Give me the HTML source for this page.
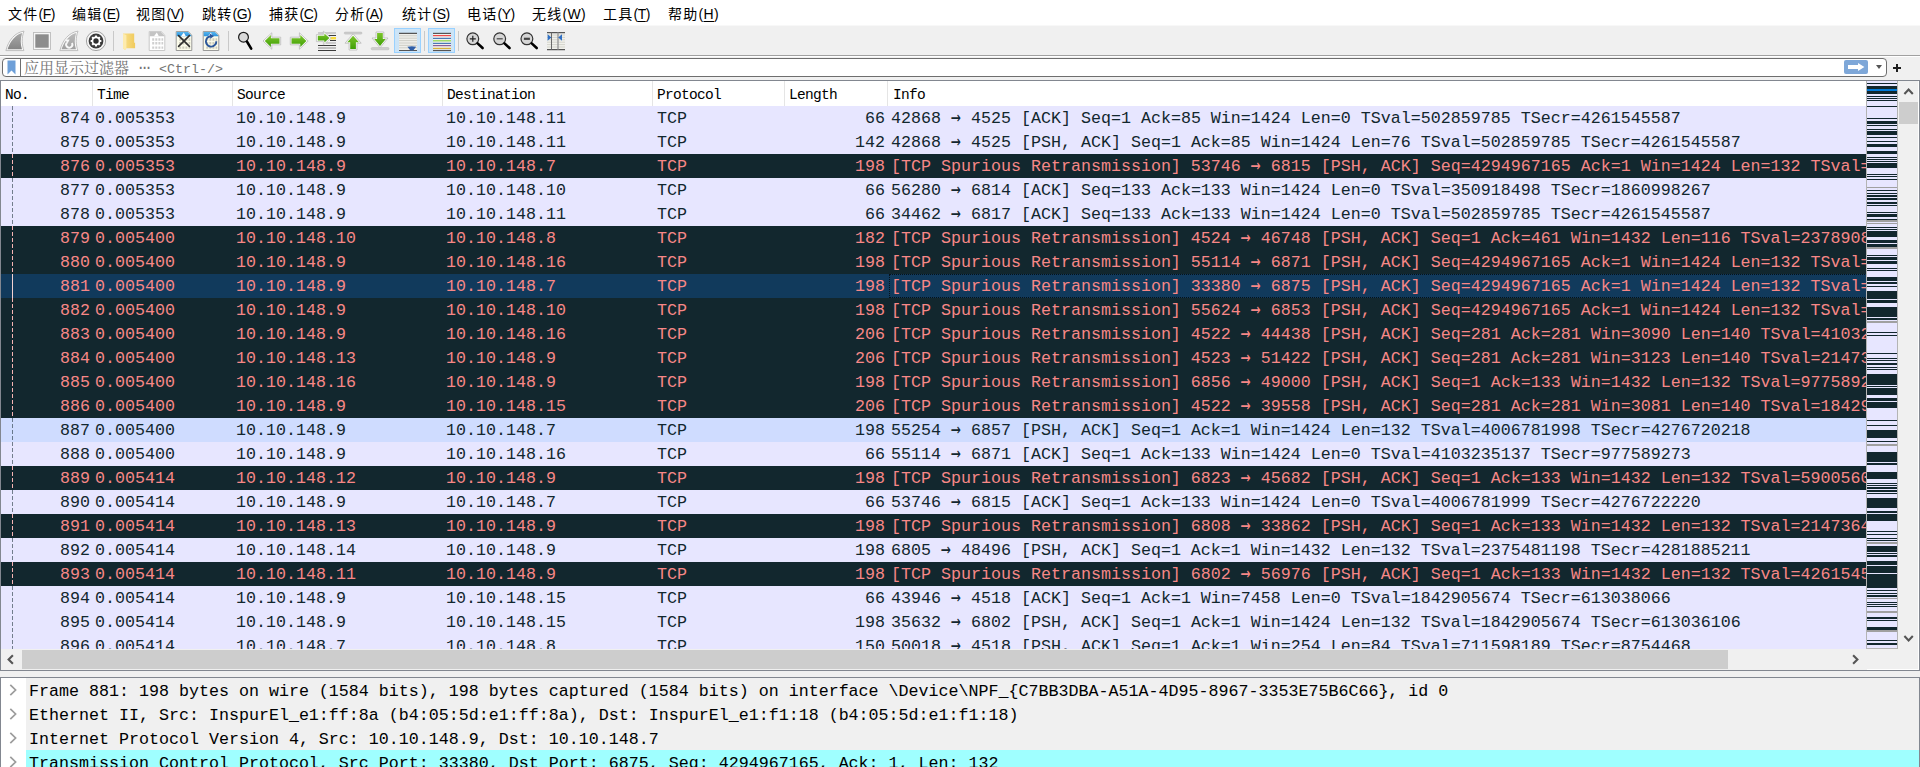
<!DOCTYPE html>
<html lang="zh-CN">
<head>
<meta charset="utf-8">
<title>Wireshark</title>
<style>
html,body{margin:0;padding:0;}
body{width:1920px;height:767px;overflow:hidden;background:#f0f0f0;position:relative;font-family:"Liberation Sans","Noto Sans CJK SC",sans-serif;}
.abs{position:absolute;}
#menubar{position:absolute;left:0;top:0;width:1920px;height:25px;background:#fff;border-bottom:1px solid #f8f8f8;}
#menubar span{position:absolute;top:4px;font-size:14px;line-height:20px;color:#000;white-space:nowrap;letter-spacing:-0.45px;}
#menubar b{font-weight:normal;letter-spacing:1.2px;}
#menubar u{text-decoration:underline;text-underline-offset:2px;}
#toolbar{position:absolute;left:0;top:26px;width:1920px;height:29px;background:#f0f0f0;}
#tbline{position:absolute;left:0;top:55px;width:1920px;height:1px;background:#a0a0a0;}
#tbline2{position:absolute;left:0;top:56px;width:1920px;height:1px;background:#fff;}
#filter{position:absolute;left:2px;top:58px;width:1883px;height:17px;border:1px solid #6e6e6e;border-radius:4px;background:#fff;}
#filter .bm{position:absolute;left:4px;top:1px;width:9px;height:15px;}
#filter .sep{position:absolute;left:17px;top:0;width:1px;height:17px;background:#6e6e6e;}
#filter .ph{position:absolute;left:21px;top:1px;word-spacing:-0.5px;font:13.33px/20px "Liberation Mono","Noto Serif CJK SC",monospace;color:#747474;white-space:pre;}
#filter .ph b{font-weight:normal;font-size:15px;}
#filter .ph em{font-style:normal;font-size:15px;position:relative;top:-5px;transform:scale(1.3);display:inline-block;width:15px;text-align:center;}
#filter .apply{position:absolute;left:1841px;top:1px;width:24px;height:14px;border-radius:2px;background:#7ea7d8;}
#filter .dd{position:absolute;left:1872.5px;top:6px;width:0;height:0;border-left:3.5px solid transparent;border-right:3.5px solid transparent;border-top:4px solid #555;}
#plus{position:absolute;left:1893px;top:64px;width:8px;height:8px;}
#plus:before{content:"";position:absolute;left:0;top:3px;width:8px;height:2px;background:#1e1e1e;}
#plus:after{content:"";position:absolute;left:3px;top:0;width:2px;height:8px;background:#1e1e1e;}
#list{position:absolute;left:0;top:80px;width:1920px;height:591px;background:#f0f0f0;}
#list .bt{position:absolute;left:0;top:0;width:1920px;height:1px;background:#828790;}
#list .bl{position:absolute;left:0;top:0;width:1px;height:591px;background:#828790;}
#list .bb{position:absolute;left:0;top:590px;width:1920px;height:1px;background:#828790;}
#list .br{position:absolute;left:1918px;top:1px;width:1px;height:589px;background:#fff;border-right:1px solid #828790;}
#hdr{position:absolute;left:1px;top:1px;width:1865px;height:25px;background:#fff;}
#hdr span{position:absolute;top:2px;font:14.5px/24px "Liberation Mono",monospace;letter-spacing:-0.7px;color:#000;white-space:pre;}
#hdr i{position:absolute;top:0;width:1px;height:25px;background:#e5e5e5;}
#rows{position:absolute;left:1px;top:26px;width:1865px;height:543px;overflow:hidden;background:#e7e6ff;}
.r{position:absolute;left:0;width:1865px;height:24px;font:16.67px/24px "Liberation Mono",monospace;white-space:pre;overflow:hidden;}
.r .c{position:absolute;top:1px;height:24px;}
.r.n{background:#e7e6ff;color:#12272e;}
.r.b{background:#12272e;color:#f78787;}
.r.s{background:#113a5c;color:#f78787;}
.r.h{background:#cfdcff;color:#12272e;}
.r .ln{position:absolute;left:11px;top:0;width:1px;height:24px;background:repeating-linear-gradient(to bottom,currentColor 0,currentColor 4px,transparent 4px,transparent 6px);opacity:.55}
.r.b .ln{color:#f6b4b4;opacity:1}
.r.s .ln{background:#f3d2d2;opacity:1}
.r .fr{position:absolute;left:888px;top:0;width:990px;height:22px;border:1px dotted #06121a;}
.in b{font-weight:normal;font-family:"DejaVu Sans Mono","Liberation Mono",monospace;font-size:16.6px;display:inline-block;width:10px;position:relative;top:0px;line-height:1;transform:scale(1,1.3);}
.no{left:0;width:89px;text-align:right;}
.tm{left:94px;}
.sr{left:235px;}
.ds{left:445px;}
.pr{left:656px;}
.le{left:786px;width:98px;text-align:right;}
.in{left:890px;}
.vs{position:absolute;left:1898px;top:1px;width:20px;height:568px;background:#f0f0f0;}
.hs{position:absolute;left:1px;top:569px;width:1866px;height:21px;background:#f0f0f0;}
#details{position:absolute;left:0;top:677px;width:1920px;height:90px;background:#fff;border-top:1px solid #828790;border-left:1px solid #828790;border-right:1px solid #828790;box-sizing:border-box;}
#details .bg{position:absolute;left:25px;top:0;width:1893px;height:90px;background:#f0f0f0;}
.d{position:absolute;left:0;width:1917px;height:24px;font:16.67px/24px "Liberation Mono",monospace;color:#000;white-space:pre;}
.d span{position:absolute;left:28px;top:2px;}
.d svg{position:absolute;left:8px;top:6px;}
.d.sel{background:transparent}
</style>
</head>
<body>
<div id="menubar">
<span style="left:8px"><b>文件</b>(<u>F</u>)</span>
<span style="left:72px"><b>编辑</b>(<u>E</u>)</span>
<span style="left:136px"><b>视图</b>(<u>V</u>)</span>
<span style="left:202px"><b>跳转</b>(<u>G</u>)</span>
<span style="left:269px"><b>捕获</b>(<u>C</u>)</span>
<span style="left:335px"><b>分析</b>(<u>A</u>)</span>
<span style="left:402px"><b>统计</b>(<u>S</u>)</span>
<span style="left:467px"><b>电话</b>(<u>Y</u>)</span>
<span style="left:532px;letter-spacing:0.4px"><b>无线</b>(<u>W</u>)</span>
<span style="left:603px"><b>工具</b>(<u>T</u>)</span>
<span style="left:668px;letter-spacing:0.4px"><b>帮助</b>(<u>H</u>)</span>
</div>
<div id="toolbar"><svg width="600" height="29" viewBox="0 26 600 29" style="position:absolute;left:0;top:0">
<defs>
<linearGradient id="gg" x1="0" y1="0" x2="0" y2="1"><stop offset="0" stop-color="#7cc52b"/><stop offset="1" stop-color="#3f9e06"/></linearGradient>
<linearGradient id="gf" x1="0" y1="0" x2="1" y2="0"><stop offset="0" stop-color="#f9e08c"/><stop offset="1" stop-color="#f0ca5c"/></linearGradient>
<linearGradient id="gfin" x1="0" y1="0" x2="0" y2="1"><stop offset="0" stop-color="#a9a9a9"/><stop offset="1" stop-color="#858585"/></linearGradient>
<linearGradient id="gfin2" x1="0" y1="0" x2="0" y2="1"><stop offset="0" stop-color="#bdbdbd"/><stop offset="1" stop-color="#a0a0a0"/></linearGradient>
<linearGradient id="gb" x1="0" y1="0" x2="0" y2="1"><stop offset="0" stop-color="#55b5ee"/><stop offset="1" stop-color="#2f93dc"/></linearGradient>
</defs>
<!-- separators -->
<g stroke="#c9c9c9" stroke-width="1"><path d="M113.5 31v20M228.5 31v20M424.5 31v20M458.5 31v20"/></g>
<!-- shark fin start (disabled) -->
<g id="fin1">
<path d="M24 31.1C15 32.5 8.5 40 5.9 50.6H23.9C22 45 21.3 38 24 31.1Z" fill="#fafafa" stroke="#b9b9b9" stroke-width="0.9"/>
<path d="M22.2 32.9C15.6 34.6 10.2 41 7.5 49.3H22C20.4 44.5 20.2 38.5 22.2 32.9Z" fill="url(#gfin)"/>
</g>
<!-- stop -->
<rect x="33.5" y="32.5" width="17" height="17" fill="#f6f6f6" stroke="#bcbcbc" stroke-width="0.9"/>
<rect x="35.3" y="34.3" width="13.4" height="13.4" fill="#8c8c8c"/>
<!-- restart fin -->
<g transform="translate(54,0)">
<path d="M24 31.1C15 32.5 8.5 40 5.9 50.6H23.9C22 45 21.3 38 24 31.1Z" fill="#fafafa" stroke="#b9b9b9" stroke-width="0.9"/>
<path d="M22.2 32.9C15.6 34.6 10.2 41 7.5 49.3H22C20.4 44.5 20.2 38.5 22.2 32.9Z" fill="url(#gfin2)"/>
<path d="M12.9 42.6A3.1 3.1 0 1 0 17.9 43" fill="none" stroke="#f8f8f8" stroke-width="1.9"/>
<path d="M11.2 39.4l4.4 0.2-2 4z" fill="#f8f8f8"/>
</g>
<!-- gear / options -->
<circle cx="96" cy="41" r="9.6" fill="#f6f6f6" stroke="#9a9a9a" stroke-width="0.9"/>
<circle cx="96" cy="41" r="7.4" fill="#3b3b3b"/>
<g fill="#fff"><circle cx="96" cy="41" r="4.4"/>
<g id="teeth"><rect x="94.9" y="35.6" width="2.2" height="10.8" rx="0.5"/><rect x="94.9" y="35.6" width="2.2" height="10.8" rx="0.5" transform="rotate(45 96 41)"/><rect x="94.9" y="35.6" width="2.2" height="10.8" rx="0.5" transform="rotate(90 96 41)"/><rect x="94.9" y="35.6" width="2.2" height="10.8" rx="0.5" transform="rotate(135 96 41)"/></g></g>
<circle cx="96" cy="41" r="2.7" fill="#2e2e2e"/>
<!-- folder -->
<path d="M123 33.6h11.2v9.2h0.9v5.4H125.6l-0.3 1.8-2.3-1.6z" fill="url(#gf)"/>
<path d="M123 33.6l3.4 1.6v13l-1.1 1.8-2.3-1.6z" fill="#fdebae"/>
<!-- save (disabled) -->
<g>
<path d="M149.2 31.6h12l3.6 3.6v15.3h-15.6z" fill="#fff" stroke="#c3c3c3" stroke-width="0.9"/>
<path d="M149.7 32.1h11.3l3.3 3.3v0.8H149.7z" fill="#c4c4c4"/>
<path d="M154 36.2l2.8-3.6 2 3.6z" fill="#fff"/>
<g stroke="#cfcfcf" stroke-width="2.4"><path d="M152.2 39.5h11M152.2 43.3h11M152.2 47.6h11" stroke-dasharray="2 1.1"/></g>
</g>
<!-- close file -->
<g>
<path d="M176.2 31.6h12l3.6 3.6v15.3h-15.6z" fill="#fbfbea" stroke="#8f8f8f" stroke-width="0.9"/>
<path d="M176.7 32.1h11.3l3.3 3.3v0.8H176.7z" fill="url(#gb)"/>
<path d="M181 36.2l2.8-3.6 2 3.6z" fill="#fff"/>
<g stroke="#cdcdbc" stroke-width="2.4"><path d="M179.2 39.5h11M179.2 43.3h11M179.2 47.6h11" stroke-dasharray="2 1.1"/></g>
<path d="M178.6 35.6l10.8 10.8M189.4 35.6l-10.8 10.8" stroke="#2e2e2e" stroke-width="1.6" stroke-linecap="round"/>
</g>
<!-- reload file -->
<g>
<path d="M203.2 31.6h12l3.6 3.6v15.3h-15.6z" fill="#fbfbea" stroke="#8f8f8f" stroke-width="0.9"/>
<path d="M203.7 32.1h11.3l3.3 3.3v0.8H203.7z" fill="url(#gb)"/>
<path d="M208 36.2l2.8-3.6 2 3.6z" fill="#fff"/>
<g stroke="#cdcdbc" stroke-width="2.4"><path d="M206.2 39.5h11M206.2 43.3h11M206.2 47.6h11" stroke-dasharray="2 1.1"/></g>
<path d="M210.8 36.2A5.2 5.2 0 1 0 216.3 41.2" fill="none" stroke="#2b579a" stroke-width="1.9"/>
<path d="M209.6 33.6l4.4 2.4-3.6 2.8z" fill="#2b579a"/>
</g>
<!-- find -->
<circle cx="243.5" cy="37.2" r="4.9" fill="#d9d9d9" stroke="#1b1b1b" stroke-width="1.2"/>
<path d="M247 41.6l4.2 7" stroke="#000" stroke-width="2.6" stroke-linecap="round"/>
<!-- back arrow -->
<path d="M263 41L271.8 32.8V37.2H280.7V44.8H271.8V49.2Z" fill="#fbfbfb" stroke="#b9b9b9" stroke-width="0.8" stroke-linejoin="round"/>
<path d="M264.8 41L270.9 35V38.3H279.5V43.8H270.9V47Z" fill="url(#gg)"/>
<!-- forward arrow -->
<path d="M308.2 41L299.4 32.8V37.2H290.3V44.8H299.4V49.2Z" fill="#fbfbfb" stroke="#b9b9b9" stroke-width="0.8" stroke-linejoin="round"/>
<path d="M306.4 41L300.3 35V38.3H291.5V43.8H300.3V47Z" fill="url(#gg)"/>
<!-- goto packet -->
<g>
<g stroke-width="1"><path d="M318 33h18" stroke="#a9a9a9"/><path d="M328 35.5h8" stroke="#3c3c3c"/><path d="M330 40.5h6" stroke="#3c3c3c"/><path d="M326 43h10" stroke="#a9a9a9"/><path d="M318 45.5h18" stroke="#3c3c3c"/><path d="M318 48h18" stroke="#a9a9a9" stroke-width="1.4"/><path d="M318 50.5h18" stroke="#3c3c3c"/></g>
<rect x="330" y="37" width="6" height="2.4" fill="#f7dc3c"/>
<path d="M331.2 38L323.4 31.2V34.6H316.4V41.6H323.4V44.8Z" fill="#fbfbfb" stroke="#b9b9b9" stroke-width="0.7" stroke-linejoin="round"/><path d="M329.4 38L324.4 33.6V35.8H317.8V40.4H324.4V42.6Z" fill="url(#gg)"/>
</g>
<!-- first packet -->
<rect x="344.2" y="32.1" width="17.8" height="2" rx="1" fill="#cfcfcf" stroke="#b4b4b4" stroke-width="0.5"/>
<path d="M353.1 33.8L361.2 43.2H357V50H349.1V43.2H345Z" fill="#fbfbfb" stroke="#b9b9b9" stroke-width="0.8" stroke-linejoin="round"/>
<path d="M353.1 35.8L358.9 42.2H355.9V49H350.2V42.2H347.3Z" fill="url(#gg)"/>
<!-- last packet -->
<rect x="371.2" y="47.6" width="17.8" height="2.2" rx="1" fill="#cfcfcf" stroke="#b4b4b4" stroke-width="0.5"/>
<path d="M380 47.8L388 38H383.8V32H376V38H372Z" fill="#fbfbfb" stroke="#b9b9b9" stroke-width="0.8" stroke-linejoin="round"/>
<path d="M380 46L385.8 39H382.8V33H377.1V39H374.2Z" fill="url(#gg)"/>
<!-- autoscroll (checked) -->
<rect x="394.5" y="28.5" width="26" height="24" fill="#cce4f7" stroke="#99d1ff"/>
<rect x="399" y="33" width="18" height="18" fill="#efefeb"/>
<g stroke="#cfcfc8" stroke-width="1"><path d="M399 35.8h18M399 38.2h18M399 40.6h18M399 43h18M399 45.4h18M399 47.8h18"/></g>
<path d="M399 33.4h18M399 50.5h18" stroke="#555" stroke-width="1.1"/>
<path d="M407.4 46.8q4.4-1.2 8.8 0l-3 3.6h-2.8z" fill="#2f5fa8"/>
<!-- colorize (checked) -->
<rect x="428.5" y="28.5" width="26" height="24" fill="#cce4f7" stroke="#99d1ff"/>
<rect x="433" y="33" width="18" height="18" fill="#efefef"/>
<g stroke-width="1.2"><path d="M433 33.4h18" stroke="#555"/><path d="M433 35.6h18" stroke="#ef4a4a"/><path d="M433 38.4h18" stroke="#4a78b5"/><path d="M433 40.8h18" stroke="#8ed84a"/><path d="M433 43.4h18" stroke="#4a78b5"/><path d="M433 45.6h18" stroke="#8b5f97"/><path d="M433 48.4h18" stroke="#d9b13b"/><path d="M433 50.5h18" stroke="#555"/></g>
<!-- zoom in -->
<g id="zin"><circle cx="472.8" cy="38.8" r="5.9" fill="#d6d6d6" stroke="#333" stroke-width="1.2"/><path d="M477.6 43.4l5 4.6" stroke="#000" stroke-width="2.6" stroke-linecap="round"/></g>
<path d="M469.8 38.8h6M472.8 35.8v6" stroke="#222" stroke-width="1.2"/>
<!-- zoom out -->
<circle cx="499.7" cy="38.8" r="5.9" fill="#d6d6d6" stroke="#333" stroke-width="1.2"/><path d="M504.5 43.4l5 4.6" stroke="#000" stroke-width="2.6" stroke-linecap="round"/>
<path d="M496.7 38.8h6" stroke="#444" stroke-width="1.2"/>
<!-- zoom reset -->
<circle cx="526.9" cy="38.8" r="5.9" fill="#d6d6d6" stroke="#333" stroke-width="1.2"/><path d="M531.7 43.4l5 4.6" stroke="#000" stroke-width="2.6" stroke-linecap="round"/>
<path d="M523.9 38.8h6" stroke="#444" stroke-width="2.2"/>
<!-- resize columns -->
<rect x="547" y="32.5" width="18" height="17" fill="#f1f1ec"/>
<g stroke="#d0d0c8" stroke-width="0.9"><path d="M547 35h18M547 37.4h18M547 39.8h18M547 42.2h18M547 44.6h18M547 47h18"/></g>
<path d="M547 32.6h18M547 49.6h18" stroke="#555" stroke-width="1.2"/>
<path d="M551.5 32.5v17" stroke="#6a6a6a" stroke-width="1"/><path d="M558 32.5v17" stroke="#9a9a9a" stroke-width="1.4"/>
<path d="M547.6 34.3l3.8 3.2-3.8 3.2z" fill="#2f6fc4"/><path d="M562 34.3l-3.8 3.2 3.8 3.2z" fill="#2f6fc4"/>
</svg>
</div>
<div id="tbline"></div><div id="tbline2"></div>
<div id="filter"><svg class="bm" viewBox="0 0 9 15"><path d="M0.5 0.5h8v14l-4-4-4 4z" fill="#6d9fd8"/></svg><i class="sep"></i><span class="ph"><b>应用显示过滤器</b> <em>…</em> &lt;Ctrl-/&gt;</span><i class="apply"><svg width="24" height="14" viewBox="0 0 24 14" style="position:absolute;left:0;top:0"><path d="M4 5h10V3l6.4 4-6.4 4V9H4z" fill="#fff"/></svg></i><i class="dd"></i></div>
<div id="plus"></div>
<div id="list">
<div id="hdr">
<span style="left:4px">No.</span><i style="left:91px"></i>
<span style="left:96px">Time</span><i style="left:231px"></i>
<span style="left:236px">Source</span><i style="left:441px"></i>
<span style="left:446px">Destination</span><i style="left:651px"></i>
<span style="left:656px">Protocol</span><i style="left:783px"></i>
<span style="left:788px">Length</span><i style="left:886px"></i>
<span style="left:892px">Info</span>
</div>
<div id="rows">
<div class="r n" style="top:0px"><i class="ln"></i><span class="c no">874</span><span class="c tm">0.005353</span><span class="c sr">10.10.148.9</span><span class="c ds">10.10.148.11</span><span class="c pr">TCP</span><span class="c le">66</span><span class="c in">42868 <b>→</b> 4525 [ACK] Seq=1 Ack=85 Win=1424 Len=0 TSval=502859785 TSecr=4261545587</span></div>
<div class="r n" style="top:24px"><i class="ln"></i><span class="c no">875</span><span class="c tm">0.005353</span><span class="c sr">10.10.148.9</span><span class="c ds">10.10.148.11</span><span class="c pr">TCP</span><span class="c le">142</span><span class="c in">42868 <b>→</b> 4525 [PSH, ACK] Seq=1 Ack=85 Win=1424 Len=76 TSval=502859785 TSecr=4261545587</span></div>
<div class="r b" style="top:48px"><i class="ln"></i><span class="c no">876</span><span class="c tm">0.005353</span><span class="c sr">10.10.148.9</span><span class="c ds">10.10.148.7</span><span class="c pr">TCP</span><span class="c le">198</span><span class="c in">[TCP Spurious Retransmission] 53746 <b>→</b> 6815 [PSH, ACK] Seq=4294967165 Ack=1 Win=1424 Len=132 TSval=4006781998 TSecr=4276720218</span></div>
<div class="r n" style="top:72px"><i class="ln"></i><span class="c no">877</span><span class="c tm">0.005353</span><span class="c sr">10.10.148.9</span><span class="c ds">10.10.148.10</span><span class="c pr">TCP</span><span class="c le">66</span><span class="c in">56280 <b>→</b> 6814 [ACK] Seq=133 Ack=133 Win=1424 Len=0 TSval=350918498 TSecr=1860998267</span></div>
<div class="r n" style="top:96px"><i class="ln"></i><span class="c no">878</span><span class="c tm">0.005353</span><span class="c sr">10.10.148.9</span><span class="c ds">10.10.148.11</span><span class="c pr">TCP</span><span class="c le">66</span><span class="c in">34462 <b>→</b> 6817 [ACK] Seq=133 Ack=133 Win=1424 Len=0 TSval=502859785 TSecr=4261545587</span></div>
<div class="r b" style="top:120px"><i class="ln"></i><span class="c no">879</span><span class="c tm">0.005400</span><span class="c sr">10.10.148.10</span><span class="c ds">10.10.148.8</span><span class="c pr">TCP</span><span class="c le">182</span><span class="c in">[TCP Spurious Retransmission] 4524 <b>→</b> 46748 [PSH, ACK] Seq=1 Ack=461 Win=1432 Len=116 TSval=2378908554 TSecr=711598189</span></div>
<div class="r b" style="top:144px"><i class="ln"></i><span class="c no">880</span><span class="c tm">0.005400</span><span class="c sr">10.10.148.9</span><span class="c ds">10.10.148.16</span><span class="c pr">TCP</span><span class="c le">198</span><span class="c in">[TCP Spurious Retransmission] 55114 <b>→</b> 6871 [PSH, ACK] Seq=4294967165 Ack=1 Win=1424 Len=132 TSval=4103235137 TSecr=977589273</span></div>
<div class="r s" style="top:168px"><i class="ln"></i><i class="fr"></i><span class="c no">881</span><span class="c tm">0.005400</span><span class="c sr">10.10.148.9</span><span class="c ds">10.10.148.7</span><span class="c pr">TCP</span><span class="c le">198</span><span class="c in">[TCP Spurious Retransmission] 33380 <b>→</b> 6875 [PSH, ACK] Seq=4294967165 Ack=1 Win=1424 Len=132 TSval=4006781998 TSecr=4276720218</span></div>
<div class="r b" style="top:192px"><i class="ln"></i><span class="c no">882</span><span class="c tm">0.005400</span><span class="c sr">10.10.148.9</span><span class="c ds">10.10.148.10</span><span class="c pr">TCP</span><span class="c le">198</span><span class="c in">[TCP Spurious Retransmission] 55624 <b>→</b> 6853 [PSH, ACK] Seq=4294967165 Ack=1 Win=1424 Len=132 TSval=350918498 TSecr=1860998267</span></div>
<div class="r b" style="top:216px"><i class="ln"></i><span class="c no">883</span><span class="c tm">0.005400</span><span class="c sr">10.10.148.9</span><span class="c ds">10.10.148.16</span><span class="c pr">TCP</span><span class="c le">206</span><span class="c in">[TCP Spurious Retransmission] 4522 <b>→</b> 44438 [PSH, ACK] Seq=281 Ack=281 Win=3090 Len=140 TSval=4103235137 TSecr=977589273</span></div>
<div class="r b" style="top:240px"><i class="ln"></i><span class="c no">884</span><span class="c tm">0.005400</span><span class="c sr">10.10.148.13</span><span class="c ds">10.10.148.9</span><span class="c pr">TCP</span><span class="c le">206</span><span class="c in">[TCP Spurious Retransmission] 4523 <b>→</b> 51422 [PSH, ACK] Seq=281 Ack=281 Win=3123 Len=140 TSval=2147364518 TSecr=502859785</span></div>
<div class="r b" style="top:264px"><i class="ln"></i><span class="c no">885</span><span class="c tm">0.005400</span><span class="c sr">10.10.148.16</span><span class="c ds">10.10.148.9</span><span class="c pr">TCP</span><span class="c le">198</span><span class="c in">[TCP Spurious Retransmission] 6856 <b>→</b> 49000 [PSH, ACK] Seq=1 Ack=133 Win=1432 Len=132 TSval=977589273 TSecr=4103235137</span></div>
<div class="r b" style="top:288px"><i class="ln"></i><span class="c no">886</span><span class="c tm">0.005400</span><span class="c sr">10.10.148.9</span><span class="c ds">10.10.148.15</span><span class="c pr">TCP</span><span class="c le">206</span><span class="c in">[TCP Spurious Retransmission] 4522 <b>→</b> 39558 [PSH, ACK] Seq=281 Ack=281 Win=3081 Len=140 TSval=1842905674 TSecr=613036106</span></div>
<div class="r h" style="top:312px"><i class="ln"></i><span class="c no">887</span><span class="c tm">0.005400</span><span class="c sr">10.10.148.9</span><span class="c ds">10.10.148.7</span><span class="c pr">TCP</span><span class="c le">198</span><span class="c in">55254 <b>→</b> 6857 [PSH, ACK] Seq=1 Ack=1 Win=1424 Len=132 TSval=4006781998 TSecr=4276720218</span></div>
<div class="r n" style="top:336px"><i class="ln"></i><span class="c no">888</span><span class="c tm">0.005400</span><span class="c sr">10.10.148.9</span><span class="c ds">10.10.148.16</span><span class="c pr">TCP</span><span class="c le">66</span><span class="c in">55114 <b>→</b> 6871 [ACK] Seq=1 Ack=133 Win=1424 Len=0 TSval=4103235137 TSecr=977589273</span></div>
<div class="r b" style="top:360px"><i class="ln"></i><span class="c no">889</span><span class="c tm">0.005414</span><span class="c sr">10.10.148.12</span><span class="c ds">10.10.148.9</span><span class="c pr">TCP</span><span class="c le">198</span><span class="c in">[TCP Spurious Retransmission] 6823 <b>→</b> 45682 [PSH, ACK] Seq=1 Ack=133 Win=1432 Len=132 TSval=590056098 TSecr=502859785</span></div>
<div class="r n" style="top:384px"><i class="ln"></i><span class="c no">890</span><span class="c tm">0.005414</span><span class="c sr">10.10.148.9</span><span class="c ds">10.10.148.7</span><span class="c pr">TCP</span><span class="c le">66</span><span class="c in">53746 <b>→</b> 6815 [ACK] Seq=1 Ack=133 Win=1424 Len=0 TSval=4006781999 TSecr=4276722220</span></div>
<div class="r b" style="top:408px"><i class="ln"></i><span class="c no">891</span><span class="c tm">0.005414</span><span class="c sr">10.10.148.13</span><span class="c ds">10.10.148.9</span><span class="c pr">TCP</span><span class="c le">198</span><span class="c in">[TCP Spurious Retransmission] 6808 <b>→</b> 33862 [PSH, ACK] Seq=1 Ack=133 Win=1432 Len=132 TSval=2147364518 TSecr=502859785</span></div>
<div class="r n" style="top:432px"><i class="ln"></i><span class="c no">892</span><span class="c tm">0.005414</span><span class="c sr">10.10.148.14</span><span class="c ds">10.10.148.9</span><span class="c pr">TCP</span><span class="c le">198</span><span class="c in">6805 <b>→</b> 48496 [PSH, ACK] Seq=1 Ack=1 Win=1432 Len=132 TSval=2375481198 TSecr=4281885211</span></div>
<div class="r b" style="top:456px"><i class="ln"></i><span class="c no">893</span><span class="c tm">0.005414</span><span class="c sr">10.10.148.11</span><span class="c ds">10.10.148.9</span><span class="c pr">TCP</span><span class="c le">198</span><span class="c in">[TCP Spurious Retransmission] 6802 <b>→</b> 56976 [PSH, ACK] Seq=1 Ack=133 Win=1432 Len=132 TSval=4261545587 TSecr=502859785</span></div>
<div class="r n" style="top:480px"><i class="ln"></i><span class="c no">894</span><span class="c tm">0.005414</span><span class="c sr">10.10.148.9</span><span class="c ds">10.10.148.15</span><span class="c pr">TCP</span><span class="c le">66</span><span class="c in">43946 <b>→</b> 4518 [ACK] Seq=1 Ack=1 Win=7458 Len=0 TSval=1842905674 TSecr=613038066</span></div>
<div class="r n" style="top:504px"><i class="ln"></i><span class="c no">895</span><span class="c tm">0.005414</span><span class="c sr">10.10.148.9</span><span class="c ds">10.10.148.15</span><span class="c pr">TCP</span><span class="c le">198</span><span class="c in">35632 <b>→</b> 6802 [PSH, ACK] Seq=1 Ack=1 Win=1424 Len=132 TSval=1842905674 TSecr=613036106</span></div>
<div class="r n" style="top:528px"><i class="ln"></i><span class="c no">896</span><span class="c tm">0.005414</span><span class="c sr">10.10.148.7</span><span class="c ds">10.10.148.8</span><span class="c pr">TCP</span><span class="c le">150</span><span class="c in">50018 <b>→</b> 4518 [PSH, ACK] Seq=1 Ack=1 Win=254 Len=84 TSval=711598189 TSecr=8754468</span></div>
</div>
<svg width="32" height="568" viewBox="1866 81 32 568" style="position:absolute;left:1866px;top:1px" shape-rendering="crispEdges">
<rect x="1866" y="81" width="32" height="568" fill="#e7e6ff"/>
<path d="M1867 83h30v1h-30zM1867 86h30v8h-30zM1867 96h30v1h-30zM1867 98h30v1h-30zM1867 100h30v1h-30zM1867 106h30v1h-30zM1867 118h30v1h-30zM1867 121h30v3h-30zM1867 125h30v1h-30zM1867 129h30v1h-30zM1867 131h30v4h-30zM1867 137h30v1h-30zM1867 141h30v1h-30zM1867 144h30v3h-30zM1867 151h30v3h-30zM1867 157h30v1h-30zM1867 159h30v1h-30zM1867 161h30v1h-30zM1867 163h30v5h-30zM1867 174h30v1h-30zM1867 176h30v1h-30zM1867 179h30v1h-30zM1867 190h30v1h-30zM1867 193h30v1h-30zM1867 195h30v2h-30zM1867 198h30v2h-30zM1867 202h30v2h-30zM1867 205h30v1h-30zM1867 212h30v1h-30zM1867 214h30v3h-30zM1867 219h30v1h-30zM1867 227h30v1h-30zM1867 229h30v1h-30zM1867 231h30v6h-30zM1867 240h30v3h-30zM1867 244h30v3h-30zM1867 255h30v1h-30zM1867 257h30v3h-30zM1867 261h30v3h-30zM1867 268h30v1h-30zM1867 270h30v1h-30zM1867 277h30v4h-30zM1867 282h30v2h-30zM1867 286h30v1h-30zM1867 291h30v8h-30zM1867 300h30v3h-30zM1867 307h30v10h-30zM1867 318h30v2h-30zM1867 332h30v1h-30zM1867 335h30v1h-30zM1867 353h30v1h-30zM1867 358h30v1h-30zM1867 360h30v1h-30zM1867 363h30v2h-30zM1867 367h30v1h-30zM1867 369h30v1h-30zM1867 374h30v11h-30zM1867 386h30v1h-30zM1867 388h30v7h-30zM1867 398h30v3h-30zM1867 402h30v6h-30zM1867 420h30v1h-30zM1867 425h30v1h-30zM1867 430h30v8h-30zM1867 441h30v1h-30zM1867 452h30v10h-30zM1867 463h30v2h-30zM1867 472h30v7h-30zM1867 483h30v1h-30zM1867 485h30v1h-30zM1867 487h30v2h-30zM1867 490h30v2h-30zM1867 493h30v1h-30zM1867 498h30v10h-30zM1867 511h30v2h-30zM1867 514h30v7h-30zM1867 531h30v1h-30zM1867 534h30v1h-30zM1867 538h30v1h-30zM1867 540h30v1h-30zM1867 546h30v6h-30zM1867 553h30v1h-30zM1867 555h30v2h-30zM1867 561h30v4h-30zM1867 566h30v7h-30zM1867 574h30v14h-30zM1867 590h30v1h-30zM1867 593h30v1h-30zM1867 595h30v2h-30zM1867 602h30v1h-30zM1867 604h30v1h-30zM1867 606h30v1h-30zM1867 617h30v2h-30zM1867 620h30v1h-30zM1867 627h30v3h-30zM1867 640h30v1h-30zM1867 643h30v2h-30z" fill="#12272e"/>
<path d="M1867 187h30v1h-30zM1867 220h30v2h-30zM1867 223h30v1h-30zM1867 247h30v2h-30zM1867 321h30v2h-30zM1867 444h30v2h-30zM1867 542h30v2h-30zM1867 598h30v1h-30zM1867 611h30v2h-30zM1867 630h30v2h-30z" fill="#a0a0a0"/>
<rect x="1867" y="89" width="30" height="2" fill="#0078d7"/>
<rect x="1866" y="81" width="1" height="568" fill="#b4b4b4"/><rect x="1897" y="81" width="1" height="568" fill="#b4b4b4"/><rect x="1866" y="648" width="32" height="1" fill="#b4b4b4"/>
</svg>
<div class="vs"><svg width="20" height="568" viewBox="0 0 20 568" style="position:absolute;left:0;top:0"><path d="M6.4 12.9l4.2-4.3 4.2 4.3M6.4 555.1l4.2 4.3 4.2-4.3" fill="none" stroke="#555" stroke-width="2.1"/></svg><i style="position:absolute;left:1px;top:21px;width:19px;height:22px;background:#cdcdcd"></i></div>
<div class="hs"><svg width="1866" height="21" viewBox="0 0 1866 21" style="position:absolute;left:0;top:0"><path d="M11.9 6.3l-4.3 4.2 4.3 4.2M1852.1 6.3l4.3 4.2-4.3 4.2" fill="none" stroke="#555" stroke-width="2.1"/></svg><i style="position:absolute;left:21px;top:1px;width:1706px;height:19px;background:#cdcdcd"></i></div>
<i style="position:absolute;left:1867px;top:589px;width:52px;height:1px;background:#fff"></i><i class="bt"></i><i class="bl"></i><i class="bb"></i><i class="br"></i>
</div>
<div id="details"><i class="bg"></i>
<div class="d" style="top:0px"><svg width="8" height="12" viewBox="0 0 8 12"><path d="M1.3 0.8l5.3 5.2-5.3 5.2" fill="none" stroke="#9c9c9c" stroke-width="1.7"/></svg><span>Frame 881: 198 bytes on wire (1584 bits), 198 bytes captured (1584 bits) on interface \Device\NPF_{C7BB3DBA-A51A-4D95-8967-3353E75B6C66}, id 0</span></div>
<div class="d" style="top:24px"><svg width="8" height="12" viewBox="0 0 8 12"><path d="M1.3 0.8l5.3 5.2-5.3 5.2" fill="none" stroke="#9c9c9c" stroke-width="1.7"/></svg><span>Ethernet II, Src: InspurEl_e1:ff:8a (b4:05:5d:e1:ff:8a), Dst: InspurEl_e1:f1:18 (b4:05:5d:e1:f1:18)</span></div>
<div class="d" style="top:48px"><svg width="8" height="12" viewBox="0 0 8 12"><path d="M1.3 0.8l5.3 5.2-5.3 5.2" fill="none" stroke="#9c9c9c" stroke-width="1.7"/></svg><span>Internet Protocol Version 4, Src: 10.10.148.9, Dst: 10.10.148.7</span></div>
<div class="d sel" style="top:72px"><svg width="8" height="12" viewBox="0 0 8 12"><path d="M1.3 0.8l5.3 5.2-5.3 5.2" fill="none" stroke="#9c9c9c" stroke-width="1.7"/></svg><i class="abs" style="left:25px;top:0;width:1893px;height:24px;background:#9fffff"></i><span>Transmission Control Protocol, Src Port: 33380, Dst Port: 6875, Seq: 4294967165, Ack: 1, Len: 132</span></div>
</div>
</body>
</html>
